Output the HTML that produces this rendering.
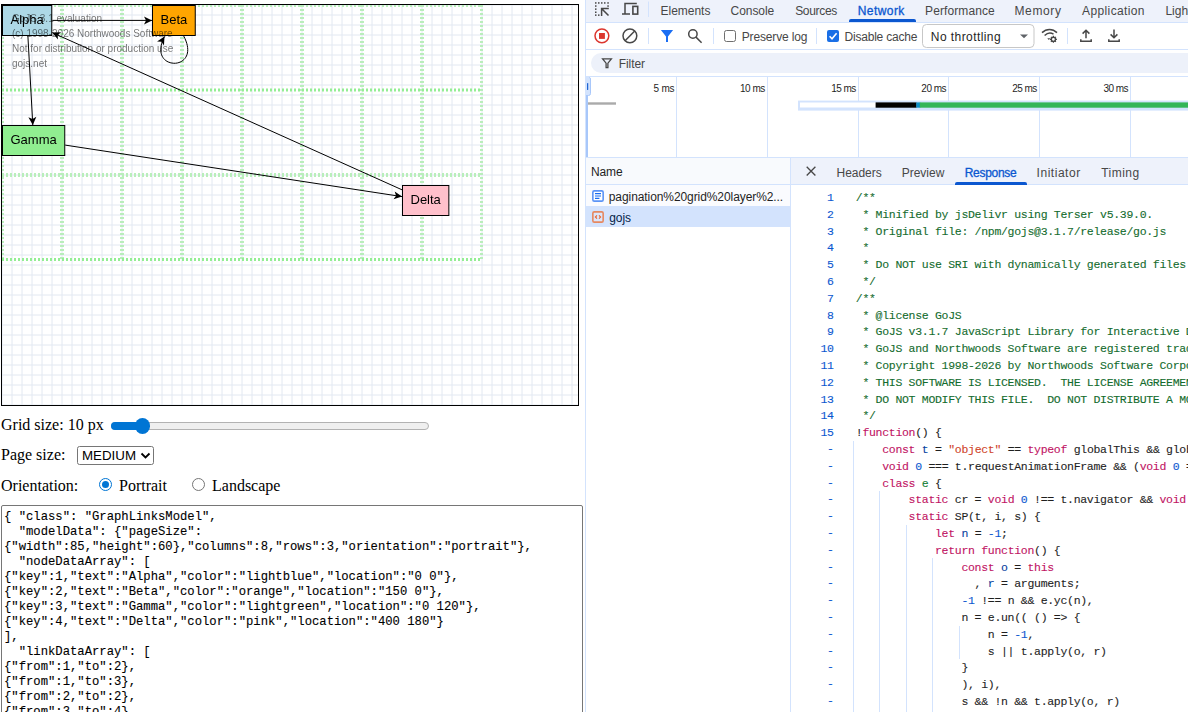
<!DOCTYPE html>
<html lang="en">
<head>
<meta charset="utf-8">
<title>Pagination Grid Layer</title>
<style>
html,body{margin:0;padding:0;background:#fff;}
body{width:1188px;height:712px;overflow:hidden;position:relative;font-family:"Liberation Serif",serif;font-size:16px;color:#000;}
.abs{position:absolute;white-space:nowrap;}
#diagram{position:absolute;left:1px;top:4px;width:576px;height:400px;border:1px solid #000;overflow:hidden;will-change:transform;}
#diagram svg{position:absolute;left:0;top:0;}
.lbl{position:absolute;left:1px;white-space:nowrap;font-size:16px;line-height:18px;}
#ta{position:absolute;left:1px;top:505px;width:580px;height:240px;border:1px solid #767676;border-radius:2px;box-sizing:content-box;overflow:hidden;background:#fff;}
#ta pre{margin:0;position:absolute;left:2px;top:4px;font-family:"Liberation Mono",monospace;font-size:12.22px;line-height:15px;color:#000;white-space:pre;-webkit-text-stroke:0.1px #000;}
/* devtools */
#dt{position:absolute;left:585px;top:0;width:603px;height:712px;overflow:hidden;background:#fff;font-family:"Liberation Sans",sans-serif;font-size:12px;color:#1f1f1f;border-left:1px solid #d3e3fd;box-sizing:border-box;}
#dt .t{position:absolute;white-space:nowrap;line-height:14px;}
#dt .tab{color:#474747;}
#dt .ms{font-size:10px;color:#1f1f1f;}
#code{position:absolute;left:0;top:0;width:603px;height:712px;font-family:"Liberation Mono",monospace;font-size:11.5px;letter-spacing:-0.3px;line-height:17px;color:#1f1f1f;}
#gut{position:absolute;left:206px;top:0;width:41.6px;text-align:right;color:#0b57d0;white-space:pre;-webkit-text-stroke:0.1px;}
#src{position:absolute;left:269.8px;top:0;white-space:pre;-webkit-text-stroke:0.1px;}
#gut div,#src div{position:absolute;height:17px;}
#gut div{right:0;}
#src div{left:0;}
#code .ig{position:absolute;width:1px;background:#d3e3fd;}
.k{color:#bf1363;}.d{color:#0842a0;}.n{color:#0b57d0;}.s{color:#d0442a;}.ty{color:#188038;}.c{color:#146c2e;}
</style>
</head>
<body>

<!-- ============ LEFT: diagram ============ -->
<div id="diagram">
<svg id="dsvg" width="576" height="400" viewBox="0 0 576 400">
  <defs>
    <pattern id="grid" x="-5" y="-5" width="10" height="10" patternUnits="userSpaceOnUse">
      <path d="M5 0V10M0 5H10" stroke="#e2e8f1" stroke-width="1" fill="none"/>
    </pattern>
  </defs>
  <rect x="0" y="0" width="576" height="400" fill="url(#grid)"/>
  <!-- page grid -->
  <clipPath id="pgc"><rect x="0" y="0" width="481" height="256"/></clipPath>
  <g id="pg" stroke-dasharray="2 2" fill="none" clip-path="url(#pgc)">
    <path stroke="#b9eebb" stroke-width="4" d="M0 0V256M60 0V256M120 0V256M180 0V256M240 0V256M300 0V256M360 0V256M420 0V256M480 0V256"/>
    <path stroke="#b9eebb" stroke-width="4" d="M0 0H480M0 170H480"/>
    <path stroke="#94ee94" stroke-width="3" d="M0 85H480M0 254.5H480"/>
  </g>
  <!-- links -->
  <g id="links" stroke="#000" stroke-width="1" fill="none">
    <path d="M50.25 15.4L150 15.4"/>
    <path d="M25.9 31L30.8 120"/>
    <path d="M181.7 31C201 67.3 144 67.3 162.5 31.5"/>
    <path d="M63.2 140.1L400 191.6"/>
    <path d="M400 184.8L50.25 27.6"/>
  </g>
  <g id="arrows" fill="#000" stroke="none">
    <path d="M0 0l-8 -4l2 4l-2 4z" transform="translate(150 15.4)"/>
    <path d="M0 0l-8 -4l2 4l-2 4z" transform="translate(30.8 120) rotate(86.9)"/>
    <path d="M0 0l-8 -4l2 4l-2 4z" transform="translate(162.5 31.5) rotate(-60)"/>
    <path d="M0 0l-8 -4l2 4l-2 4z" transform="translate(400 191.6) rotate(8.7)"/>
    <path d="M0 0l-8 -4l2 4l-2 4z" transform="translate(50.25 27.6) rotate(204.2)"/>
  </g>
  <!-- nodes -->
  <g id="nodes" stroke="#000" stroke-width="1" font-family="Liberation Sans, sans-serif" font-size="13">
    <rect x="0.5" y="0.5" width="49.25" height="30" fill="lightblue"/>
    <rect x="150.5" y="0.5" width="42.75" height="30" fill="orange"/>
    <rect x="0.5" y="120.5" width="62.25" height="30" fill="lightgreen"/>
    <rect x="400.5" y="180.5" width="46.35" height="30" fill="pink"/>
    <g stroke="none" fill="#000">
      <text x="8.5" y="19.2">Alpha</text>
      <text x="158.5" y="19.2">Beta</text>
      <text x="8.5" y="139.2">Gamma</text>
      <text x="408.5" y="199.2">Delta</text>
    </g>
  </g>
  
</svg>
<div id="wm" style="position:absolute;left:10px;top:5.5px;font-family:'Liberation Sans',sans-serif;font-size:10px;line-height:15px;color:#000;opacity:0.55;will-change:transform;white-space:nowrap;">GoJS 3.1 evaluation<br>(c) 1998-2026 Northwoods Software<br>Not for distribution or production use<br>gojs.net</div>
</div>

<!-- ============ LEFT: controls ============ -->
<div class="lbl" id="l1" style="top:416px;">Grid size: 10 px</div>
<div id="slider" style="position:absolute;left:111px;top:422px;width:318px;height:8px;">
  <div style="position:absolute;left:0;top:0;width:316px;height:6px;border:1px solid #b2b2b2;border-radius:4px;background:#efefef;"></div>
  <div style="position:absolute;left:0;top:0;width:31px;height:8px;border-radius:4px 0 0 4px;background:#0075d4;"></div>
  <div style="position:absolute;left:23.7px;top:-3.7px;width:15px;height:15.4px;border-radius:50%;background:#0075d4;"></div>
</div>
<div class="lbl" id="l2" style="top:446px;">Page size:</div>
<div id="sel" style="position:absolute;left:77px;top:446px;width:75px;height:17px;border:1px solid #767676;border-radius:2.5px;background:#fff;">
  <span class="abs" id="selt" style="left:4px;top:1px;font-family:'Liberation Sans',sans-serif;font-size:13.33px;line-height:15px;">MEDIUM</span>
  <svg style="position:absolute;left:62px;top:5px;" width="11" height="8" viewBox="0 0 11 8"><path d="M1.5 1.5L5.5 5.5L9.5 1.5" stroke="#000" stroke-width="1.8" fill="none"/></svg>
</div>
<div class="lbl" id="l3" style="top:477px;">Orientation:</div>
<div id="r1" style="position:absolute;left:99px;top:478px;width:11px;height:11px;border:1px solid #0075d4;border-radius:50%;background:#fff;"><div style="position:absolute;left:2px;top:2px;width:7px;height:7px;border-radius:50%;background:#0075d4;"></div></div>
<div class="lbl" id="l4" style="left:119px;top:477px;">Portrait</div>
<div id="r2" style="position:absolute;left:192px;top:478px;width:11px;height:11px;border:1px solid #767676;border-radius:50%;background:#fff;"></div>
<div class="lbl" id="l5" style="left:212px;top:477px;">Landscape</div>

<div id="ta"><pre>{ "class": "GraphLinksModel",
  "modelData": {"pageSize":
{"width":85,"height":60},"columns":8,"rows":3,"orientation":"portrait"},
  "nodeDataArray": [
{"key":1,"text":"Alpha","color":"lightblue","location":"0 0"},
{"key":2,"text":"Beta","color":"orange","location":"150 0"},
{"key":3,"text":"Gamma","color":"lightgreen","location":"0 120"},
{"key":4,"text":"Delta","color":"pink","location":"400 180"}
],
  "linkDataArray": [
{"from":1,"to":2},
{"from":1,"to":3},
{"from":2,"to":2},
{"from":3,"to":4},
{"from":4,"to":1}
]}</pre></div>

<!-- ============ RIGHT: devtools ============ -->
<div id="dt">
<!-- tab bar -->
<div style="position:absolute;left:0;top:0;width:603px;height:22px;background:#eef2fb;border-bottom:1px solid #d3e3fd;"></div>
<svg style="position:absolute;left:0;top:0;" width="70" height="23" viewBox="586 0 70 23">
  <g fill="#474747">
    <!-- dotted square -->
    <rect x="595" y="2.2" width="1.5" height="1.5"/><rect x="598" y="2.2" width="1.5" height="1.5"/><rect x="601" y="2.2" width="1.5" height="1.5"/><rect x="604" y="2.2" width="1.5" height="1.5"/><rect x="607.3" y="2.2" width="1.5" height="1.5"/>
    <rect x="595" y="5.3" width="1.5" height="1.5"/><rect x="595" y="8.4" width="1.5" height="1.5"/><rect x="595" y="11.5" width="1.5" height="1.5"/><rect x="595" y="14.4" width="1.5" height="1.5"/>
    <rect x="598" y="14.4" width="1.5" height="1.5"/>
    <rect x="607.3" y="5.3" width="1.5" height="1.5"/>
  </g>
  <path d="M608.8 8.6H601.6V15.9M602 9L608.5 15.5" stroke="#474747" stroke-width="1.5" fill="none"/>
  <!-- device -->
  <path d="M636.8 3.6H625V13.9M622 14H630" stroke="#474747" stroke-width="1.5" fill="none"/>
  <rect x="632.9" y="6.4" width="4.8" height="7.7" stroke="#474747" stroke-width="1.6" fill="none"/>
  <rect x="648" y="1.5" width="1" height="15.5" fill="#d3e3fd"/>
</svg>
<span class="t tab" id="tEl" style="left:74.52px;top:4px;letter-spacing:-0.018px;">Elements</span>
<span class="t tab" id="tCo" style="left:144.62px;top:4px;letter-spacing:-0.072px;">Console</span>
<span class="t tab" id="tSo" style="left:209.15px;top:4px;letter-spacing:-0.298px;">Sources</span>
<span class="t tab" id="tNe" style="-webkit-text-stroke:0.3px #0b57d0;left:271.69px;top:4px;color:#0b57d0;letter-spacing:0.441px;">Network</span>
<div style="position:absolute;left:262.5px;top:19px;width:67px;height:3px;background:#0b57d0;border-radius:2px 2px 0 0;"></div>
<span class="t tab" id="tPe" style="left:339.02px;top:4px;letter-spacing:0.108px;">Performance</span>
<span class="t tab" id="tMe" style="left:428.46px;top:4px;letter-spacing:0.627px;">Memory</span>
<span class="t tab" id="tAp" style="left:496.10px;top:4px;letter-spacing:0.374px;">Application</span>
<span class="t tab" id="tLi" style="left:579.4px;top:4px;">Lighthouse</span>

<!-- toolbar -->
<div style="position:absolute;left:0;top:49px;width:603px;height:1px;background:#d3e3fd;"></div>
<svg style="position:absolute;left:0;top:23px;" width="603" height="26" viewBox="586 23 603 26">
  <circle cx="601.9" cy="35.85" r="6.9" stroke="#dc362e" stroke-width="1.5" fill="none"/>
  <rect x="599" y="33" width="5.9" height="5.9" fill="#dc362e"/>
  <circle cx="629.9" cy="35.85" r="6.9" stroke="#474747" stroke-width="1.5" fill="none"/>
  <path d="M625.1 40.7L634.7 31" stroke="#474747" stroke-width="1.5"/>
  <rect x="648" y="28" width="1" height="16" fill="#d3e3fd"/>
  <path d="M660.9 29.9H673.1L668 36.4V41.9H666V36.4Z" fill="#1b6ef3"/>
  <circle cx="692.9" cy="34" r="4.2" stroke="#474747" stroke-width="1.5" fill="none"/>
  <path d="M696 37.1L701.6 42.7" stroke="#474747" stroke-width="1.5"/>
  <rect x="713" y="28" width="1" height="16" fill="#d3e3fd"/>
  <!-- preserve log checkbox -->
  <rect x="724.5" y="30.5" width="11" height="11" rx="2" stroke="#6f6f6f" stroke-width="1" fill="#fff"/>
  <rect x="816" y="28" width="1" height="16" fill="#d3e3fd"/>
  <!-- disable cache checkbox -->
  <rect x="827" y="30" width="12" height="12" rx="2" fill="#1a6fe6"/>
  <path d="M829.6 36.2L832 38.7L836.6 33.2" stroke="#fff" stroke-width="1.6" fill="none"/>
  <!-- throttle select -->
  <rect x="922.5" y="24.5" width="111.5" height="23" rx="4" stroke="#c7c7c7" stroke-width="1" fill="#fff"/>
  <path d="M1020 34.4H1028L1024 38.3Z" fill="#5f6368"/>
  <!-- wifi settings -->
  <g stroke="#474747" stroke-width="1.5" fill="none">
    <path d="M1042 32.6C1046.5 28.3 1052.5 28.3 1057 32.6"/>
    <path d="M1044.6 35.5C1047.5 32.8 1051 32.6 1053.5 34.2"/>
  </g>
  <path d="M1047.3 38.3L1050.3 38.3L1048.8 40Z" fill="#474747"/>
  <circle cx="1053.4" cy="39.3" r="2.1" stroke="#474747" stroke-width="1.4" fill="none"/>
  <g stroke="#474747" stroke-width="1.2">
    <path d="M1053.4 35.8V37M1053.4 41.6V42.8M1049.9 39.3H1051.1M1055.7 39.3H1056.9M1050.9 36.8L1051.8 37.7M1055 40.9L1055.9 41.8M1050.9 41.8L1051.8 40.9M1055 37.7L1055.9 36.8"/>
  </g>
  <rect x="1067" y="28" width="1" height="16" fill="#d3e3fd"/>
  <!-- upload -->
  <g stroke="#474747" stroke-width="1.5" fill="none">
    <path d="M1086 38.3V30.4M1082.6 33.6L1086 30.2L1089.4 33.6"/>
    <path d="M1080.8 39.2V41.2H1091.2V39.2"/>
    <path d="M1114 29.4V37.6M1110.6 34.4L1114 37.8L1117.4 34.4"/>
    <path d="M1108.8 39.2V41.2H1119.2V39.2"/>
  </g>
</svg>
<span class="t" id="tPl" style="left:155.70px;top:30px;color:#474747;letter-spacing:-0.140px;">Preserve log</span>
<span class="t" id="tDc" style="left:258.50px;top:30px;color:#474747;letter-spacing:-0.208px;">Disable cache</span>
<span class="t" id="tNt" style="left:344.83px;top:30px;color:#1f1f1f;letter-spacing:0.425px;">No throttling</span>

<!-- filter row -->
<div style="position:absolute;left:4.8px;top:53px;width:700px;height:20px;border-radius:10px;background:#edf1fa;"></div>
<svg style="position:absolute;left:14px;top:56px;" width="14" height="14" viewBox="600 56 14 14">
  <path d="M602.6 58.8H611.4L607.9 63.2V67.6H606.1V63.2Z" stroke="#474747" stroke-width="1.3" fill="none" stroke-linejoin="miter"/>
</svg>
<span class="t" id="tFi" style="left:32.72px;top:56.6px;color:#474747;letter-spacing:-0.062px;">Filter</span>
<div style="position:absolute;left:0;top:76px;width:603px;height:1px;background:#d3e3fd;"></div>
<!-- overview timeline -->
<svg style="position:absolute;left:0;top:77px;" width="603" height="81" viewBox="586 77 603 81">
  <g fill="#d3e3fd">
    <rect x="676" y="77" width="1" height="80"/><rect x="767" y="77" width="1" height="80"/><rect x="858" y="77" width="1" height="80"/>
    <rect x="948" y="77" width="1" height="80"/><rect x="1039" y="77" width="1" height="80"/><rect x="1130" y="77" width="1" height="80"/>
    <rect x="586" y="157" width="603" height="1"/>
  </g>
  <rect x="586" y="77" width="2" height="80" fill="#a8c7fa"/>
  <path d="M586 77H588.5Q590.5 77 590.5 79V93.5Q590.5 95.5 588.5 95.5H586Z" fill="#d3e3fd"/>
  <path d="M586 95.5H588.5Q590.5 95.5 590.5 93.5V79Q590.5 77.6 589.3 77.5" fill="none" stroke="#a8c7fa" stroke-width="1"/>
  <rect x="587.1" y="83" width="1.1" height="7" rx="0.5" fill="#0b57d0"/>
  <rect x="588" y="102.3" width="28" height="2.4" fill="#aaaaaa"/>
  <rect x="798" y="100.6" width="392" height="10" fill="#d3e3fd"/>
  <rect x="800" y="102.5" width="76" height="5" fill="#fff"/>
  <rect x="875.6" y="102.4" width="41" height="5.3" fill="#000"/>
  <rect x="916.3" y="102.4" width="4" height="5.3" fill="#0d8dc6"/>
  <rect x="919.8" y="102.4" width="270" height="5.3" fill="#34b658"/>
</svg>
<span class="t ms" id="m1" style="left:67.62px;top:82px;letter-spacing:-0.221px;">5 ms</span>
<span class="t ms" id="m2" style="left:153.91px;top:82px;letter-spacing:-0.467px;">10 ms</span>
<span class="t ms" id="m3" style="left:245.20px;top:82px;letter-spacing:-0.535px;">15 ms</span>
<span class="t ms" id="m4" style="left:335.32px;top:82px;letter-spacing:-0.485px;">20 ms</span>
<span class="t ms" id="m5" style="left:426.29px;top:82px;letter-spacing:-0.545px;">25 ms</span>
<span class="t ms" id="m6" style="left:517.46px;top:82px;letter-spacing:-0.530px;">30 ms</span>

<!-- name list -->
<div style="position:absolute;left:0;top:158px;width:204px;height:26px;background:#f8fafd;border-bottom:1px solid #d3e3fd;"></div>
<span class="t" id="tNa" style="left:4.96px;top:164.5px;letter-spacing:-0.121px;">Name</span>
<div style="position:absolute;left:0;top:185px;width:204px;height:21px;background:#fafbfe;"></div>
<div style="position:absolute;left:0;top:206px;width:204px;height:21px;background:#d3e3fd;"></div>
<svg style="position:absolute;left:5px;top:189px;" width="16" height="36" viewBox="591 189 16 36">
  <rect x="592.85" y="190.85" width="10.3" height="10.3" rx="1.4" stroke="#5b94f6" stroke-width="1.6" fill="#fff"/>
  <path d="M595 193.6H601M595 196H601M595 198.4H599.4" stroke="#1a6cf0" stroke-width="1.1"/>
  <rect x="592.85" y="211.85" width="10.3" height="10.3" rx="1.4" stroke="#e68860" stroke-width="1.6" fill="#dbe6fb"/>
  <path d="M597 215.4L595.4 217L597 218.6M599 215.4L600.6 217L599 218.6" stroke="#e8622c" stroke-width="1.1" fill="none"/>
</svg>
<span class="t" id="tPa" style="left:22.79px;top:190.4px;letter-spacing:-0.083px;">pagination%20grid%20layer%2...</span>
<span class="t" id="tGo" style="left:23.26px;top:211px;color:#041e49;letter-spacing:-0.094px;">gojs</span>
<div style="position:absolute;left:204px;top:158px;width:1px;height:554px;background:#d3e3fd;"></div>

<!-- response tabs -->
<div style="position:absolute;left:205px;top:158px;width:398px;height:26px;background:#eef2fb;border-bottom:1px solid #d3e3fd;"></div>
<svg style="position:absolute;left:219px;top:164px;" width="14" height="16" viewBox="805 164 14 16">
  <path d="M806.7 166.8L815.4 175.5M815.4 166.8L806.7 175.5" stroke="#474747" stroke-width="1.3"/>
</svg>
<span class="t tab" id="tHe" style="left:250.60px;top:166.3px;letter-spacing:-0.048px;">Headers</span>
<span class="t tab" id="tPr" style="left:315.66px;top:166.3px;letter-spacing:0.002px;">Preview</span>
<span class="t tab" id="tRe" style="-webkit-text-stroke:0.3px #0b57d0;left:378.73px;top:166.3px;color:#0b57d0;letter-spacing:-0.301px;">Response</span>
<div style="position:absolute;left:369.3px;top:181.5px;width:72px;height:3px;background:#0b57d0;border-radius:2px 2px 0 0;"></div>
<span class="t tab" id="tIn" style="left:450.58px;top:166.3px;letter-spacing:0.530px;">Initiator</span>
<span class="t tab" id="tTi" style="left:515.24px;top:166.3px;letter-spacing:0.475px;">Timing</span>
<!-- response code -->
<div id="code">
<div id="gut"><div style="top:189px">1</div><div style="top:206px">2</div><div style="top:223px">3</div><div style="top:239px">4</div><div style="top:256px">5</div><div style="top:273px">6</div><div style="top:290px">7</div><div style="top:307px">8</div><div style="top:323px">9</div><div style="top:340px">10</div><div style="top:357px">11</div><div style="top:374px">12</div><div style="top:391px">13</div><div style="top:407px">14</div><div style="top:424px">15</div><div style="top:440px">-</div><div style="top:457px">-</div><div style="top:474px">-</div><div style="top:490px">-</div><div style="top:507px">-</div><div style="top:524px">-</div><div style="top:541px">-</div><div style="top:558px">-</div><div style="top:574px">-</div><div style="top:591px">-</div><div style="top:608px">-</div><div style="top:625px">-</div><div style="top:642px">-</div><div style="top:658px">-</div><div style="top:675px">-</div><div style="top:692px">-</div><div style="top:709px">-</div></div>
<div id="src"><div style="top:189px"><span class="c">/**</span></div><div style="top:206px"><span class="c"> * Minified by jsDelivr using Terser v5.39.0.</span></div><div style="top:223px"><span class="c"> * Original file: /npm/gojs@3.1.7/release/go.js</span></div><div style="top:239px"><span class="c"> *</span></div><div style="top:256px"><span class="c"> * Do NOT use SRI with dynamically generated files! More information:</span></div><div style="top:273px"><span class="c"> */</span></div><div style="top:290px"><span class="c">/**</span></div><div style="top:307px"><span class="c"> * @license GoJS</span></div><div style="top:323px"><span class="c"> * GoJS v3.1.7 JavaScript Library for Interactive Diagrams</span></div><div style="top:340px"><span class="c"> * GoJS and Northwoods Software are registered trademarks of Northwoods Software Corporation.</span></div><div style="top:357px"><span class="c"> * Copyright 1998-2026 by Northwoods Software Corporation.  All Rights Reserved.</span></div><div style="top:374px"><span class="c"> * THIS SOFTWARE IS LICENSED.  THE LICENSE AGREEMENT IS AT: license.html</span></div><div style="top:391px"><span class="c"> * DO NOT MODIFY THIS FILE.  DO NOT DISTRIBUTE A MODIFIED COPY OF THE CONTENTS OF THIS FILE.</span></div><div style="top:407px"><span class="c"> */</span></div><div style="top:424px">!<span class="k">function</span>() {</div><div style="top:441px">    <span class="k">const</span> <span class="d">t</span> = <span class="s">&quot;object&quot;</span> == <span class="k">typeof</span> globalThis &amp;&amp; globalThis</div><div style="top:458px">    <span class="k">void</span> <span class="n">0</span> === t.requestAnimationFrame &amp;&amp; (<span class="k">void</span> <span class="n">0</span> === t.setImmediate</div><div style="top:475px">    <span class="k">class</span> <span class="ty">e</span> {</div><div style="top:491px">        <span class="k">static</span> cr = <span class="k">void</span> <span class="n">0</span> !== t.navigator &amp;&amp; <span class="k">void</span> <span class="n">0</span> !== t.navigator</div><div style="top:508px">        <span class="k">static</span> SP(t, i, s) {</div><div style="top:525px">            <span class="k">let</span> <span class="d">n</span> = <span class="n">-1</span>;</div><div style="top:542px">            <span class="k">return</span> <span class="k">function</span>() {</div><div style="top:559px">                <span class="k">const</span> <span class="d">o</span> = <span class="k">this</span></div><div style="top:575px">                  , <span class="d">r</span> = arguments;</div><div style="top:592px">                <span class="n">-1</span> !== n &amp;&amp; e.yc(n),</div><div style="top:609px">                n = e.un(( () =&gt; {</div><div style="top:626px">                    n = <span class="n">-1</span>,</div><div style="top:643px">                    s || t.apply(o, r)</div><div style="top:659px">                }</div><div style="top:676px">                ), i),</div><div style="top:693px">                s &amp;&amp; !n &amp;&amp; t.apply(o, r)</div><div style="top:710px">            }</div></div>
<div class="ig" style="left:267.0px;top:441.0px;height:302.0px;"></div>
<div class="ig" style="left:293.0px;top:491.0px;height:252.0px;"></div>
<div class="ig" style="left:320.0px;top:525.0px;height:218.0px;"></div>
<div class="ig" style="left:346.0px;top:558.0px;height:185.0px;"></div>
<div class="ig" style="left:373.0px;top:626.0px;height:33.0px;"></div>
</div>
</div>

</body>
</html>
